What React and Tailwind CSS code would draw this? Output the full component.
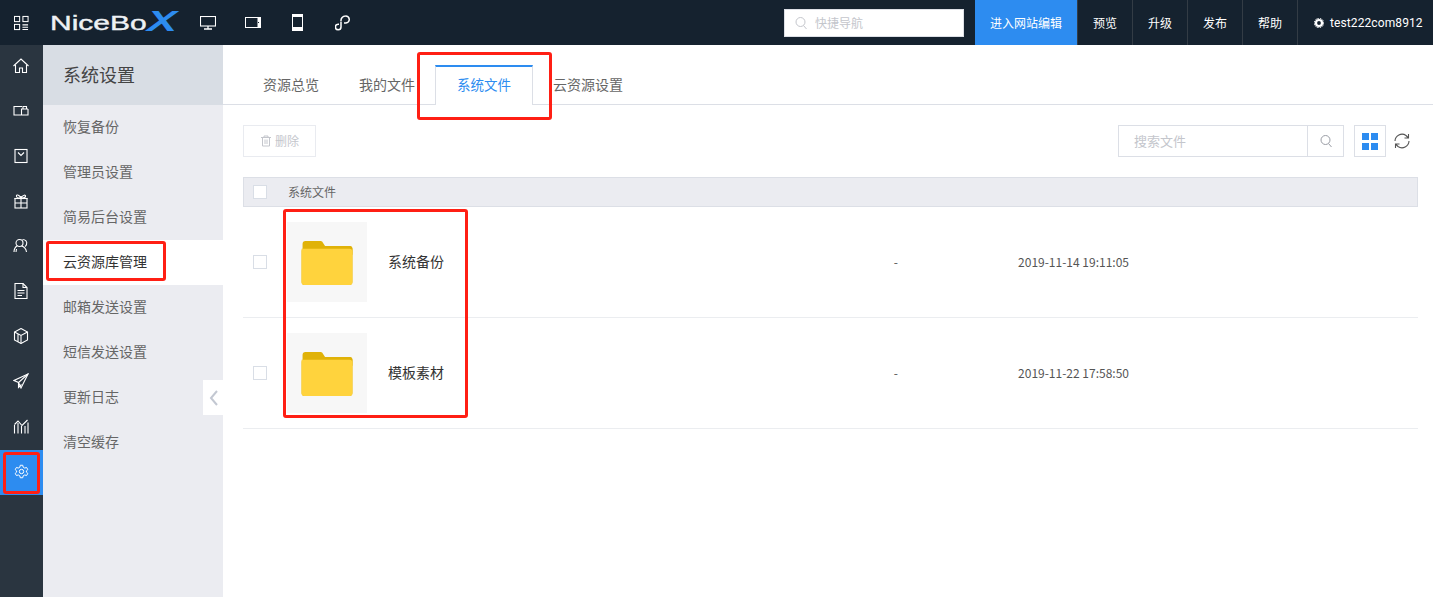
import React from "react";

const FONT = { fontFamily: '"Noto Sans CJK SC","Liberation Sans",sans-serif' };

const S = ({ w = 16, h = 16, vb = "0 0 16 16", children, className = "" }) => (
  <svg width={w} height={h} viewBox={vb} fill="none" stroke="currentColor" strokeWidth="1.1" className={className}>
    {children}
  </svg>
);

const railIcons = [
  <><path d="M.5 8 8 1l7.500 7" /><path d="M2.500 7v7.500h4v-4.500h3v4.500h4V7" /></>,
  <><path d="M9 3.500H1v8.500h14V6" /><path d="M8.500 12V6H15" /><path d="M10 6V3.500h3.500V6" /></>,
  <><rect x="2" y="1.500" width="12" height="13" /><path d="M5 4.500 8 7.500l3-3" /></>,
  <><rect x="2" y="5.500" width="12" height="9.500" /><path d="M1.500 5.500h13M8 3v12M2 10h12M8 5C6 1.500 3 1 3.500 3.500S7 5 8 5c1 0 4 .5 4.500-1.500S10 1.500 8 5" /></>,
  <><circle cx="6.500" cy="5" r="3.500" /><path d="M1 14c0-4 2-5.500 3.500-6.500M8.500 8c2 .5 4.500 2.500 5 6M9.500 1.500c3 0 5 2 4 5-.2.8-1 1.500-1.500 2M3.500 11l-.5 3" /></>,
  <><path d="M2 .5h8l4 4v11H2z" /><path d="M10 .5v4h4M4.500 7.500h7M4.500 10h7M4.500 12.500h4.500" /></>,
  <><path d="M8 .5 14.500 4v8L8 15.500 1.500 12V4z" /><path d="M1.500 4 8 7.500 14.500 4M8 7.500v8M5 5.800v8" /></>,
  <><path d="M15 1 1 7.500 5.500 9.500l2.500 5.500z" /><path d="M15 1 5.500 9.500v5l3-3" /></>,
  <><path d="M1.500 15.500V7M5 15.500V5M8.500 15.500V8M12 15.500V8M15 15.500V4.500" /><path d="M1.500 6.500 5 3l4 4.500 5.500-5.500" /></>,
];

const Gear = () => (
  <svg width="15" height="15" viewBox="0 0 24 24" fill="none" stroke="currentColor" strokeWidth="1.6">
    <circle cx="12" cy="12" r="3.500" />
    <path d="M10 2h4l.6 3 2.600 1.500 2.900-1 2 3.500-2.300 2v2l2.300 2-2 3.500-2.900-1L14.600 19 14 22h-4l-.6-3-2.600-1.500-2.900 1-2-3.500 2.300-2v-2L1.900 9l2-3.500 2.900 1L9.400 5z" />
  </svg>
);

const Folder = () => (
  <svg width="52" height="44" viewBox="0 0 52 45">
    <path d="M1 3a3 3 0 0 1 3-3h15a3 3 0 0 1 3 2l2 3h25a3 3 0 0 1 3 3v6H1z" fill="#e0b208" />
    <path d="M1 8a3 3 0 0 0-1 2v32a3 3 0 0 0 3 3h46a3 3 0 0 0 3-3V8a3 3 0 0 0-3-3v3z" fill="#e0b208" />
    <path d="M0 8h49a3 3 0 0 1 3 3v31a3 3 0 0 1-3 3H3a3 3 0 0 1-3-3z" fill="#ffd33d" />
  </svg>
);

const Check = () => <span className="block w-[14px] h-[14px] border border-[#d9dee6] bg-white shrink-0" />;

const Search = ({ className = "" }) => (
  <svg width="14" height="14" viewBox="0 0 14 14" fill="none" stroke="currentColor" strokeWidth="1" className={className}>
    <circle cx="6.500" cy="6" r="4.500" /><path d="m9.500 9.500 3 3.500" />
  </svg>
);

const RedBox = ({ className }) => (
  <div className={"absolute border-[3px] border-[#ff1f14] rounded-[3px] pointer-events-none " + className} />
);

const menu = ["恢复备份", "管理员设置", "简易后台设置", "云资源库管理", "邮箱发送设置", "短信发送设置", "更新日志", "清空缓存"];
const top = ["预览", "升级", "发布", "帮助"];

const Row = ({ name, date }) => (
  <div className="flex items-center h-[111px] border-b border-[#ebedf0]">
    <div className="w-[44px] pl-[10px]"><Check /></div>
    <div className="w-[80px] h-[80px] bg-[#f7f7f7] flex items-center justify-center">
      <div className="mt-[1px]"><Folder /></div>
    </div>
    <div className="w-[96px] text-center text-[14px] text-[#333] pl-[2px] pb-[2px]">{name}</div>
    <div className="w-[435px] text-right text-[12px] text-[#555]">-</div>
    <div className="w-[231px] text-right text-[12px] text-[#555]">{date}</div>
  </div>
);

export default function App() {
  return (
    <div className="relative h-[597px] overflow-hidden bg-white flex flex-col" style={FONT}>
      <header className="h-[45px] bg-[#15222f] flex items-center text-white shrink-0">
        <div className="w-[43px] flex justify-center">
          <S w={15} h={16}>
            <rect x=".5" y="1" width="5.500" height="5.500" /><rect x="9.500" y="1" width="5.500" height="5.500" />
            <rect x=".5" y="9.500" width="5.500" height="5.500" /><path d="M9 10h6M9 12.500h6M9 15h6" />
          </S>
        </div>
        <div className="w-[136px] ml-[7px] h-[30px] flex items-center text-[#eef1f5] whitespace-nowrap relative" style={{ fontFamily: '"Liberation Sans",sans-serif' }}>
          <span className="text-[20px] leading-none [transform:scaleX(1.5)] origin-left [-webkit-text-stroke:0.4px_#eef1f5]">NiceBo</span>
          <span className="absolute left-[97px] top-[-2px] text-[30px] leading-none font-bold italic text-[#2d8cf0] [transform:scaleX(1.5)] origin-left">X</span>
        </div>
        <div className="flex items-center ml-[14px]">
          <div className="w-[16px]"><S w={16} h={14} vb="0 0 16 14"><rect x=".5" y=".5" width="15" height="9.500" /><path d="M8 10v3M4 13h8" strokeWidth="1.300" /></S></div>
          <div className="w-[16px] ml-[29px]"><svg width="16" height="11" viewBox="0 0 16 11"><rect x=".5" y=".5" width="15" height="10" fill="none" stroke="currentColor" /><rect x="12.500" y="1" width="3" height="9" fill="currentColor" /><rect x="13" y="5" width="1" height="1" fill="#15222f" /></svg></div>
          <div className="w-[12px] ml-[31px]"><svg width="11" height="17" viewBox="0 0 11 17"><rect x=".5" y=".5" width="10" height="16" rx="1" fill="none" stroke="currentColor" strokeWidth="1" /><rect x="0" y="0" width="11" height="3" fill="currentColor" /><rect x="0" y="13" width="11" height="4" fill="currentColor" /></svg></div>
          <div className="w-[16px] ml-[31px]"><S w={16} h={16}><path d="M6 6.500V12a2.800 2.800 0 1 1-2.800-2.800H4M6 6a4.500 4.500 0 0 1 4.500-5 3.500 3.500 0 0 1 .5 7H9" strokeWidth="1.500" /></S></div>
        </div>
        <div className="ml-auto flex items-center h-full">
          <div className="w-[180px] h-[28px] bg-white border border-[#dde0e6] flex items-center pl-[9px] gap-[7px] text-[12px] text-[#c4c6cc] mr-[11px]">
            <Search />
            <span>快捷导航</span>
          </div>
          <div className="w-[102px] h-full bg-[#2d8cf0] flex items-center justify-center text-[12px]">进入网站编辑</div>
          {top.map((t) => (
            <div key={t} className="w-[55px] h-full flex items-center justify-center text-[12px] border-l border-[#333c45]">{t}</div>
          ))}
          <div className="w-[136px] h-full flex items-center pl-[16px] gap-[6px] text-[12px] border-l border-[#333c45]">
            <svg width="10" height="10" viewBox="0 0 10 10"><circle cx="5" cy="5" r="3" fill="none" stroke="white" strokeWidth="2.200" /><circle cx="5" cy="5" r="4.700" fill="none" stroke="white" strokeWidth="1" strokeDasharray="1.500 1" /></svg>
            <span className="tracking-[0.1px]" style={{ fontFamily: '"Roboto",sans-serif' }}>test222com8912</span>
          </div>
        </div>
      </header>

      <div className="flex flex-1 min-h-0">
        <nav className="w-[43px] bg-[#2a3540] text-white shrink-0">
          {railIcons.map((p, i) => (
            <div key={i} className="h-[45px] flex items-center justify-center pr-[1px] pb-[3px]"><S>{p}</S></div>
          ))}
          <div className="h-[45px] bg-[#2d8cf0] flex items-center justify-center pr-[1px] pb-[3px]"><Gear /></div>
        </nav>

        <aside className="relative w-[180px] bg-[#ebecf1] shrink-0">
          <div className="h-[60px] bg-[#d8dde4] flex items-center pl-[20px] pb-[2px] text-[18px] text-[#444]">系统设置</div>
          {menu.map((m) => (
            <div key={m} className={"h-[45px] flex items-center pl-[20px] pb-[2px] text-[14px] " + (m === "云资源库管理" ? "bg-white text-[#333]" : "text-[#666]")}>{m}</div>
          ))}
          <div className="absolute right-0 top-[335px] w-[20px] h-[35px] bg-white flex items-center justify-center">
            <svg width="10" height="16" viewBox="0 0 10 16" fill="none" stroke="#c3c8d2" strokeWidth="2" className="ml-[2px]"><path d="M8 1 2 8l6 7" /></svg>
          </div>
        </aside>

        <main className="flex-1 min-w-0">
          <div className="h-[60px] border-b border-[#dcdfe6] flex items-end pl-[20px] text-[14px] text-[#666]">
            <div className="w-[96px] h-[39px] flex items-center justify-center">资源总览</div>
            <div className="w-[96px] h-[39px] flex items-center justify-center">我的文件</div>
            <div className="w-[98px] h-[40px] mb-[-1px] pb-[4px] bg-white border-x border-[#dcdfe6] border-t-2 border-t-[#2d8cf0] flex items-center justify-center text-[13.500px] text-[#2d8cf0]">系统文件</div>
            <div className="pl-[20px] h-[39px] flex items-center">云资源设置</div>
          </div>

          <div className="flex items-center h-[32px] mt-[20px] ml-[20px] mr-[22px]">
            <div className="w-[73px] h-[32px] border border-[#e9ebf0] flex items-center justify-center gap-[3px] text-[12px] text-[#c4c6cc]">
              <svg width="12" height="12" viewBox="0 0 12 12" fill="none" stroke="currentColor"><path d="M1 2.500h10M4 2.500V1h4v1.500M2.500 2.500V11h7V2.500M5 4.500V9M7 4.500V9" /></svg>
              删除
            </div>
            <div className="ml-auto w-[226px] h-[32px] border border-[#dcdfe6] flex items-center text-[13px] text-[#c4c6cc]">
              <span className="flex-1 pl-[15px] pb-[1px]">搜索文件</span>
              <span className="w-[36px] h-full border-l border-[#dcdfe6] flex items-center justify-center text-[#9a9da5]"><Search /></span>
            </div>
            <div className="ml-[10px] w-[32px] h-[32px] border border-[#dcdfe6] flex items-center justify-center">
              <span className="grid grid-cols-2 gap-x-[2px] gap-y-[3px]">
                <i className="block w-[7px] h-[7px] bg-[#2d8cf0]" /><i className="block w-[7px] h-[7px] bg-[#2d8cf0]" />
                <i className="block w-[7px] h-[7px] bg-[#2d8cf0]" /><i className="block w-[7px] h-[7px] bg-[#2d8cf0]" />
              </span>
            </div>
            <div className="ml-[7px] w-[18px] text-[#555]">
              <S w={18} h={18} vb="0 0 18 18"><path d="M2 9a7 7 0 0 1 11-5.500l2 2M15.500 2v4h-4M16 9a7 7 0 0 1-11 5.500l-2-2M2.500 16v-4h4" /></S>
            </div>
          </div>

          <div className="mt-[20px] ml-[20px] mr-[15px]">
            <div className="h-[30px] bg-[#ebecf1] border border-[#dcdfe6] flex items-center pl-[9px] text-[12px] text-[#666]">
              <Check /><span className="ml-[21px]">系统文件</span>
            </div>
            <Row name="系统备份" date="2019-11-14 19:11:05" />
            <Row name="模板素材" date="2019-11-22 17:58:50" />
          </div>
        </main>
      </div>

      <RedBox className="left-[417px] top-[52px] w-[135px] h-[68px]" />
      <RedBox className="left-[46px] top-[241px] w-[120px] h-[40px]" />
      <RedBox className="left-[3px] top-[452px] w-[37px] h-[42px]" />
      <RedBox className="left-[283px] top-[209px] w-[185px] h-[209px]" />
    </div>
  );
}
